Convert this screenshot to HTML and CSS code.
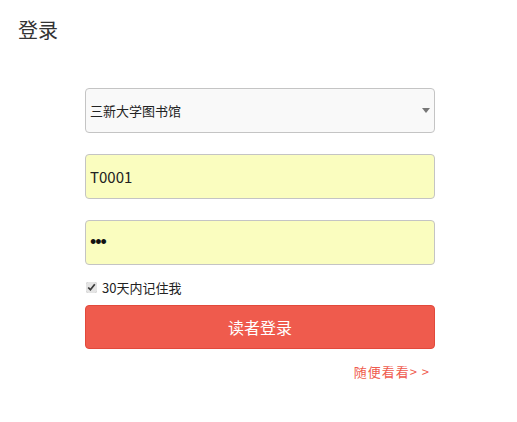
FILE: index.html
```html
<!DOCTYPE html>
<html lang="zh-CN">
<head>
    <meta charset="UTF-8">
    <meta name="viewport" content="width=device-width, initial-scale=1.0">
    <title>登录</title>
    <link rel="stylesheet" href="styles.css">
</head>
<body>
    <h1 class="titulo">登录</h1>

    <form class="login">
        <div class="campo select-box">
            <select class="control select">
                <option>三新大学图书馆</option>
            </select>
            <span class="flecha"></span>
        </div>

        <div class="campo">
            <input class="control relleno usuario" type="text" value="T0001">
        </div>

        <div class="campo">
            <input class="control relleno clave" type="password" value="abc">
        </div>

        <label class="recordar">
            <input type="checkbox" checked> 30天内记住我
        </label>

        <button type="button" class="boton">读者登录</button>

        <div class="extra">
            <a href="#">随便看看&gt; &gt;</a>
        </div>
    </form>
</body>
</html>
```

FILE: styles.css
```css
body {
    font-family: "Noto Sans CJK SC", "Liberation Sans", sans-serif;
    background-color: white;
    margin: 0;
    color: #333;
}

.titulo {
    font-size: 20px;
    font-weight: normal;
    margin: 0;
    padding: 17px 0 0 18px;
    line-height: 26px;
}

.login {
    width: 350px;
    margin: 45px 0 0 85px;
}

.campo {
    position: relative;
    margin-bottom: 21px;
}

.control {
    display: block;
    width: 100%;
    height: 45px;
    box-sizing: border-box;
    border: 1px solid #c4c4c4;
    border-radius: 4px;
    padding: 0 4px;
    font-family: inherit;
    color: #222;
    outline: none;
}

.select {
    appearance: none;
    background-color: #f9f9f9;
    font-size: 13px;
}

.flecha {
    position: absolute;
    right: 5px;
    top: 20px;
    border-left: 4px solid transparent;
    border-right: 4px solid transparent;
    border-top: 5px solid #777;
}

.relleno {
    background-color: #fafdbf;
    font-size: 15px;
}

.clave {
    font-family: "Liberation Sans", sans-serif;
    font-size: 18px;
    letter-spacing: -1px;
    color: #111;
}

.recordar {
    display: flex;
    align-items: center;
    font-size: 13px;
    color: #222;
    margin-top: -9px;
    height: 20px;
}

.recordar input {
    margin: 0 5px 0 1px;
    width: 11px;
    height: 11px;
    accent-color: #e4e4e4;
}

.boton {
    display: block;
    width: 100%;
    height: 44px;
    margin-top: 8px;
    border: 1px solid #e2493b;
    border-radius: 4px;
    background-color: #ef5b4d;
    color: white;
    font-family: inherit;
    font-size: 16px;
}

.extra {
    text-align: right;
    margin-top: 9px;
    padding-right: 5px;
}

.extra a {
    color: #ef5b4d;
    font-size: 13px;
    text-decoration: none;
    letter-spacing: 1px;
}
```
